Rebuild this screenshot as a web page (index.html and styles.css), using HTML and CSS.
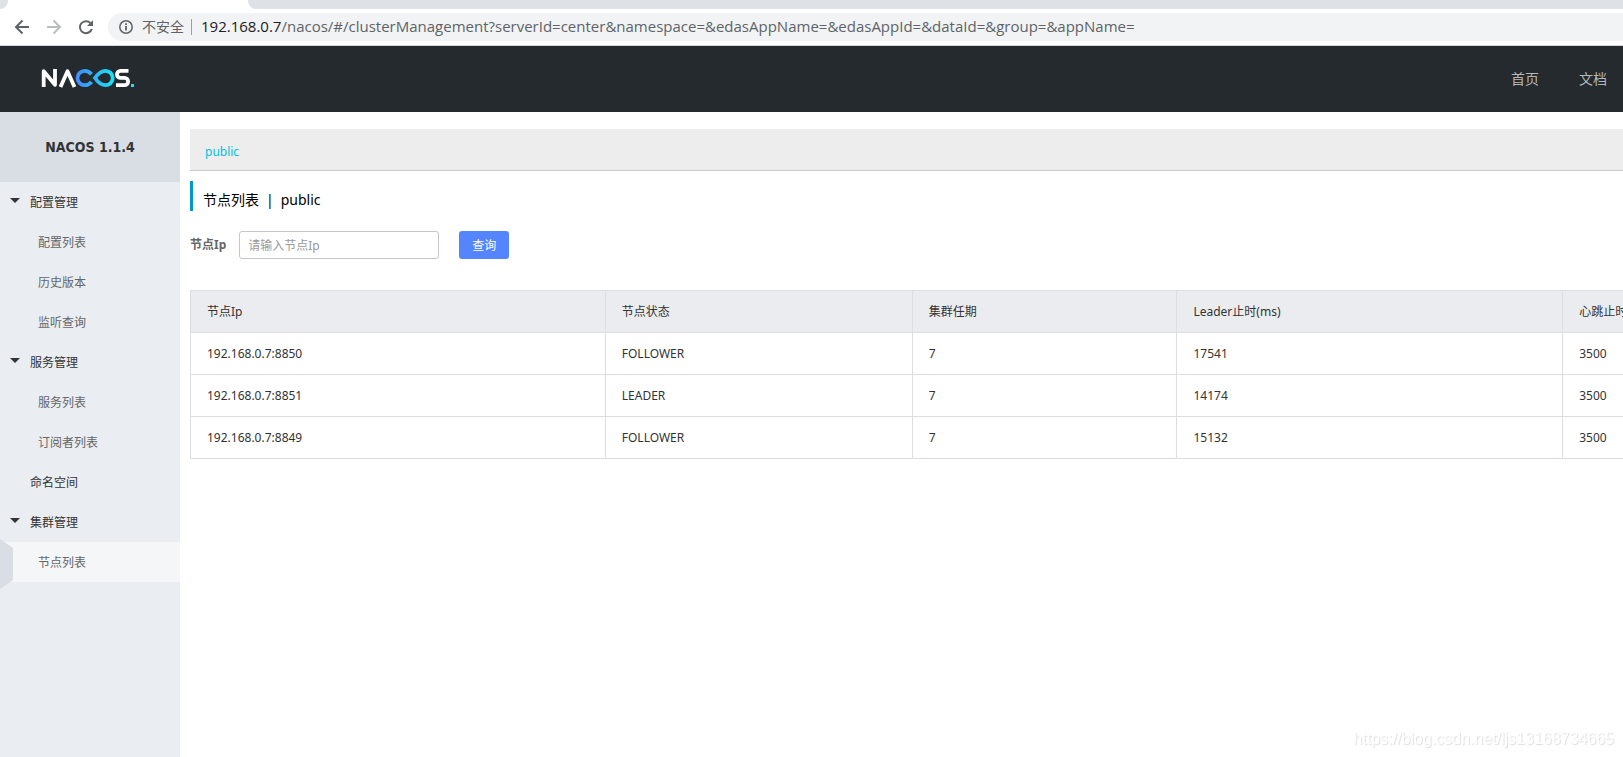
FILE: index.html
```html
<!DOCTYPE html>
<html lang="zh-CN">
<head>
<meta charset="utf-8">
<title>Nacos</title>
<link rel="stylesheet" href="styles.css">
</head>
<body>
<div class="browser">
  <div class="tabs"><span class="tab-prev"></span><span class="tab-active"></span><span class="tab-rest"></span></div>
  <div class="toolbar">
    <button class="nav-btn" type="button" aria-label="后退"><svg width="16" height="16" viewBox="0 0 16 16" fill="none" stroke="#5f6368" stroke-width="2"><path d="M15 8H2.500M8.500 1.500L2 8l6.500 6.500"/></svg></button>
    <button class="nav-btn" type="button" aria-label="前进"><svg width="16" height="16" viewBox="0 0 16 16" fill="none" stroke="#babcbe" stroke-width="2"><path d="M1 8h12.500M7.500 1.500L14 8l-6.500 6.500"/></svg></button>
    <button class="nav-btn" type="button" aria-label="刷新"><svg width="16" height="16" viewBox="0 0 16 16"><path d="M13 3.200A7 7 0 1 0 14.800 10H12.600A5 5 0 1 1 11.500 4.600L9 7h6V1z" fill="#5f6368"/></svg></button>
    <div class="address">
      <svg width="14" height="14" viewBox="0 0 14 14" fill="none" stroke="#5f6368"><circle cx="7" cy="7" r="6.200" stroke-width="1.500"/><path d="M7 6v4.500M7 3.300v1.600" stroke-width="1.800"/></svg>
      <span class="insecure">不安全</span>
      <span class="url"><b>192.168.0.7</b>/nacos/#/clusterManagement?serverId=center&amp;namespace=&amp;edasAppName=&amp;edasAppId=&amp;dataId=&amp;group=&amp;appName=</span>
    </div>
  </div>
</div>
<header class="header">
  <a href="#" class="logo" aria-label="Nacos">
    <svg width="94" height="20" viewBox="0 0 94 20" fill="none" stroke-width="3.800">
      <defs><linearGradient id="wave" gradientUnits="userSpaceOnUse" x1="35" y1="0" x2="74" y2="0"><stop offset="0" stop-color="#4488ff"/><stop offset="1" stop-color="#16e4f4"/></linearGradient></defs>
      <path d="M3.700 19V3.200L15 16.800V1" stroke="#fff" stroke-linejoin="round"/>
      <path d="M20.500 19L27.500 3.200L34.500 19" stroke="#fff" stroke-linejoin="round"/>
      <path d="M51.500 13.800C49.800 16 47.500 17.200 44.700 17.200A7.200 7.200 0 0 1 44.700 2.800C47.700 2.800 49.800 4.200 51.500 6.200M55 10C58.500 5 61.500 2.800 65.500 2.800A7.200 7.200 0 0 1 65.500 17.200C61.500 17.200 58.500 15 55 10Z" stroke="url(#wave)"/>
      <path d="M88.500 2.900H80.500A3.500 3.500 0 0 0 80.500 9.900H84.500A3.600 3.600 0 0 1 84.500 17.100H76" stroke="#fff"/>
      <path d="M91 16h3v3h-3z" fill="#16e4f4"/>
    </svg>
  </a>
  <nav class="top-nav"><a href="#">首页</a><a href="#">文档</a></nav>
</header>
<div class="layout">
  <aside class="sidebar">
    <h1 class="version">NACOS 1.1.4</h1>
    <nav class="menu">
      <a href="#" class="group open">配置管理</a>
      <a href="#" class="item">配置列表</a>
      <a href="#" class="item">历史版本</a>
      <a href="#" class="item">监听查询</a>
      <a href="#" class="group open">服务管理</a>
      <a href="#" class="item">服务列表</a>
      <a href="#" class="item">订阅者列表</a>
      <a href="#" class="group">命名空间</a>
      <a href="#" class="group open">集群管理</a>
      <a href="#" class="item active">节点列表</a>
    </nav>
  </aside>
  <main class="main">
    <div class="namespaces"><a href="#">public</a></div>
    <h2 class="page-title"><span>节点列表</span><span>|</span><span>public</span></h2>
    <form class="search">
      <label for="ip">节点Ip</label>
      <input id="ip" type="text" placeholder="请输入节点Ip">
      <button type="button">查询</button>
    </form>
    <table class="nodes">
      <colgroup><col class="c-ip"><col class="c-state"><col class="c-term"><col class="c-leader"><col></colgroup>
      <thead><tr><th>节点Ip</th><th>节点状态</th><th>集群任期</th><th>Leader止时(ms)</th><th>心跳止时(ms)</th></tr></thead>
      <tbody>
        <tr><td>192.168.0.7:8850</td><td>FOLLOWER</td><td>7</td><td>17541</td><td>3500</td></tr>
        <tr><td>192.168.0.7:8851</td><td>LEADER</td><td>7</td><td>14174</td><td>3500</td></tr>
        <tr><td>192.168.0.7:8849</td><td>FOLLOWER</td><td>7</td><td>15132</td><td>3500</td></tr>
      </tbody>
    </table>
  </main>
</div>
<div class="watermark">https://blog.csdn.net/ljs13168734665</div>
</body>
</html>
```

FILE: styles.css
```css
* { box-sizing: border-box; }
body {
  margin: 0;
  min-height: 100vh;
  display: flex;
  flex-direction: column;
  overflow-x: hidden;
  background: #fff;
  color: #333;
  font: 12px/18px "Noto Sans", "Noto Sans CJK SC", sans-serif;
}
a { color: inherit; text-decoration: none; }
button, input { font: inherit; }

.browser { border-bottom: 1px solid #d5d7da; }
.tabs { display: flex; height: 9px; }
.tab-prev { width: 8px; background: #dee1e6; border-bottom-right-radius: 8px; }
.tab-active { width: 240px; }
.tab-rest { flex: 1; background: #dee1e6; border-bottom-left-radius: 8px; }
.toolbar { display: flex; align-items: center; gap: 16px; padding: 4px 0 4px 14px; }
.nav-btn { display: flex; padding: 0; border: 0; background: none; }
.address {
  flex: 1;
  min-width: 0;
  display: flex;
  align-items: center;
  height: 28px;
  margin-left: -2px;
  padding-left: 11px;
  border-radius: 14px 0 0 14px;
  background: #f1f3f4;
  color: #5f6368;
  font-size: 14px;
  white-space: nowrap;
}
.insecure { margin-left: 9px; padding-right: 7px; border-right: 1px solid #9aa0a6; line-height: 16px; }
.url { margin-left: 9px; padding-bottom: 2px; font-family: "Open Sans", sans-serif; font-size: 15px; }
.url b { font-weight: 400; color: #202124; }

.header {
  display: flex;
  align-items: center;
  justify-content: space-between;
  height: 66px;
  padding: 0 16px 0 40px;
  background: #252a2f;
}
.logo { display: flex; padding-bottom: 2px; }
.top-nav { display: flex; gap: 40px; color: #b5b7b9; font-size: 14px; }

.layout { flex: 1; display: flex; }
.sidebar { flex: 0 0 180px; background: #eaedf1; }
.version {
  margin: 0;
  background: #d9dde4;
  font: 700 14px/70px "DejaVu Sans Condensed", "DejaVu Sans", sans-serif;
  text-align: center;
}
.menu a { position: relative; display: block; height: 40px; padding-top: 2px; line-height: 38px; }
.menu .group { padding-left: 30px; }
.menu .item { padding-left: 38px; color: #666; }
.open::before {
  content: "";
  position: absolute;
  left: 10px;
  top: 16px;
  border: 5px solid transparent;
  border-top-color: #333;
  border-bottom: 0;
}
.menu .active { background: #f5f6f8; }
.active::before {
  content: "";
  position: absolute;
  left: 0;
  top: -3px;
  width: 13px;
  height: 50px;
  background: #d9dde4;
  clip-path: polygon(0 0, 100% 18%, 100% 82%, 0 100%);
}

.main { flex: 1; min-width: 0; padding: 17px 0 0 10px; overflow: hidden; }
.namespaces { padding: 14px 15px 9px; background: #ededed; border-bottom: 1px solid #ccc; color: #00c1de; }
.page-title {
  display: flex;
  gap: 7px;
  margin: 10px 0 20px;
  padding: 8px 0 0 10px;
  border-left: 3px solid #09c;
  color: #000;
  font-size: 14px;
  font-weight: 400;
  line-height: 22px;
}
.search { display: flex; align-items: center; margin-bottom: 31px; }
.search label { color: #666; font-weight: 700; margin-right: 13px; }
.search input { width: 200px; height: 28px; padding: 1px 8px 0; border: 1px solid #c4c6cf; border-radius: 3px; background: #fff; }
.search input::placeholder { color: #999; }
.search button { width: 50px; height: 28px; margin-left: 20px; padding: 1px 0 0; border: 0; border-radius: 3px; background: #5584ff; color: #fff; }

.nodes { width: 110%; table-layout: fixed; border-collapse: collapse; }
.nodes th, .nodes td { height: 42px; padding: 0 16px; border: 1px solid #dcdee3; text-align: left; font-weight: 400; white-space: nowrap; }
.nodes th { background: #ebecf0; }
.c-ip { width: 26.33%; }
.c-state { width: 19.48%; }
.c-term { width: 16.81%; }
.c-leader { width: 24.49%; }

.watermark {
  position: fixed;
  right: 9px;
  bottom: 8px;
  color: #fff;
  font: 16px/20px "Liberation Sans", Arial, sans-serif;
  text-shadow: 1px 1px 1px #ddd;
}
```
